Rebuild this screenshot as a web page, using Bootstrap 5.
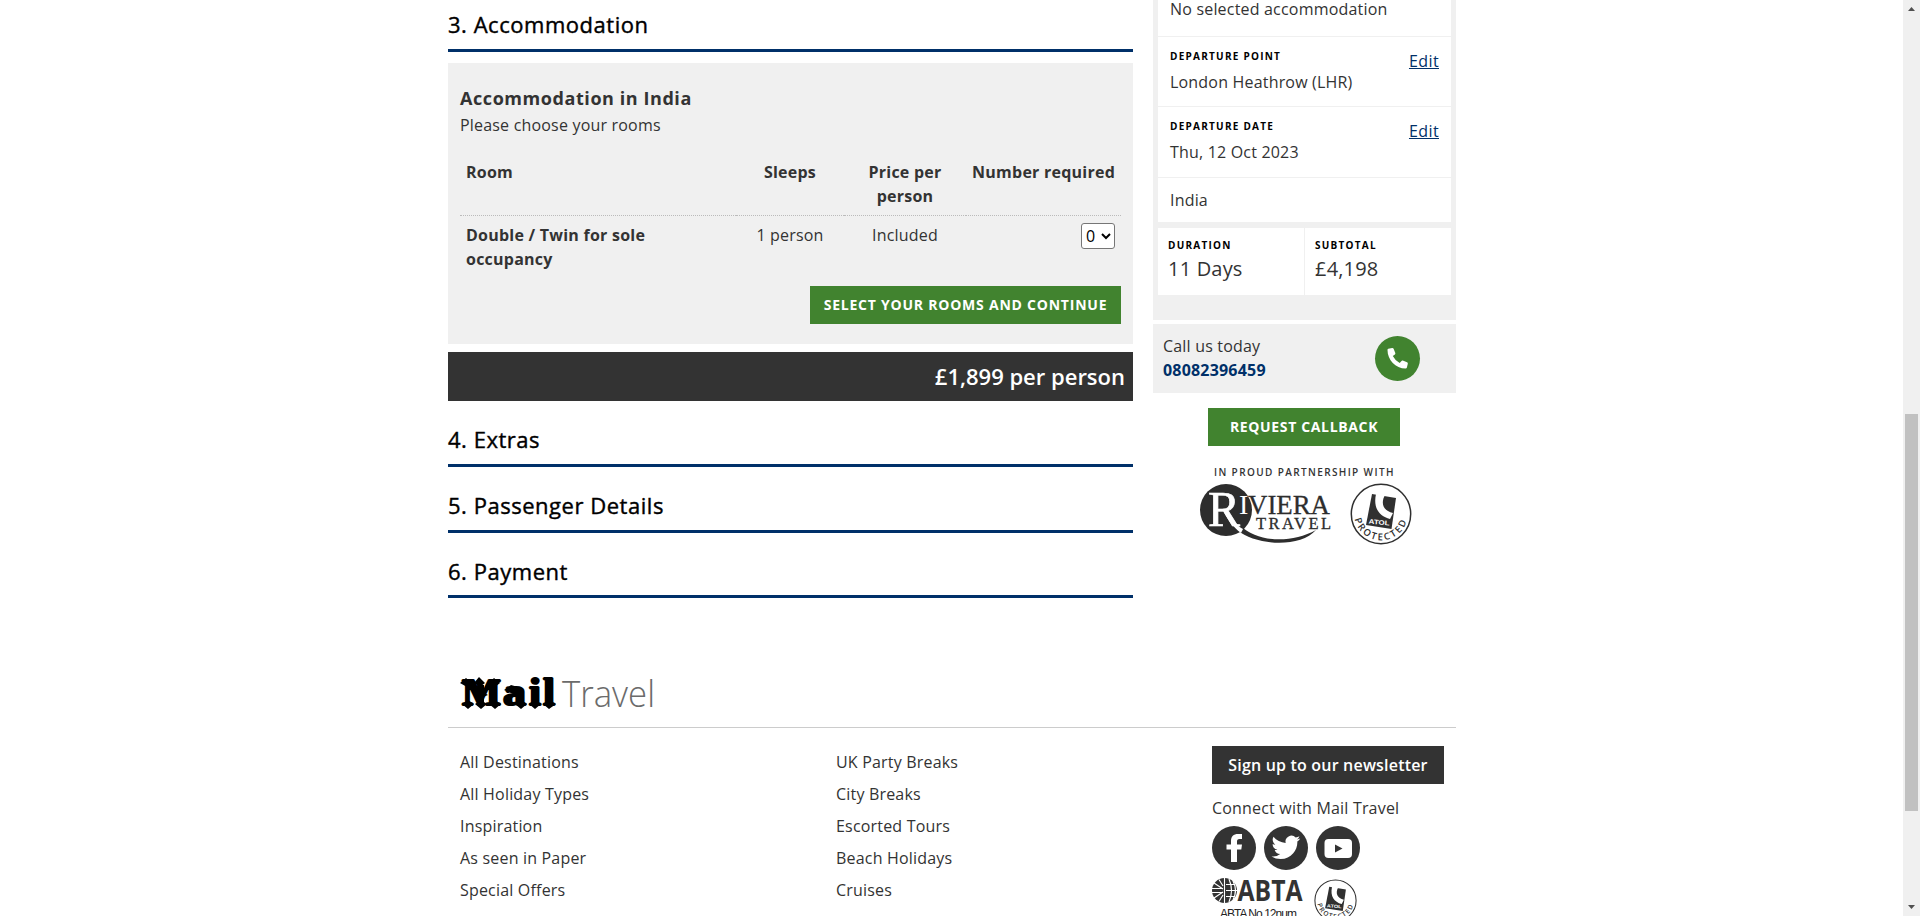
<!DOCTYPE html>
<html lang="en">
<head>
<meta charset="utf-8">
<title>Mail Travel</title>
<link href="https://cdn.jsdelivr.net/npm/bootstrap@5.3.0/dist/css/bootstrap.min.css" rel="stylesheet">
<style>
body{font-family:"Open Sans",sans-serif;font-size:16px;line-height:24px;letter-spacing:.19px;color:#333;background:#fff}
.wrapper{width:1008px;margin-left:448px}
.booking{width:685px}
.summary{width:303px}
.step{font-size:22px;line-height:30px;font-weight:500;letter-spacing:.53px;-webkit-text-stroke:.4px #000;color:#000;border-bottom:3px solid #003069;margin:0}
.step-first{height:52px;padding-top:9px}
.step-next{height:66px;padding-top:23px}
.panel{background:#f0f0f0;height:281px;margin-top:11px;padding:23px 12px 0}
.panel h3{font-size:18px;line-height:24px;font-weight:700;letter-spacing:.57px;margin:0}
.intro{margin-top:3px}
.rooms{width:661px;margin:20px 0 0;table-layout:fixed}
.rooms th{font-weight:700;letter-spacing:.24px}
.rooms th,.rooms td{padding:3px 6px 7px;vertical-align:top;line-height:24px}
.rooms thead tr{border-bottom:1px dotted #bbb}
.rooms tbody td,.rooms tbody th{padding-top:7px;padding-bottom:0}
.rooms select{width:34px;height:26px;padding:0;font:16px "Open Sans",sans-serif;border:1px solid #767676;border-radius:3px;background:#fff;display:inline-block}
.cta{background:#41832f;color:#fff;font-weight:700;border-radius:0;height:38px;line-height:38px;padding:0;border:0;letter-spacing:.77px;font-size:14px;text-align:center}
.cta-rooms{width:311px;margin-top:15px}
.cta-call{width:192px;margin:15px 0 0 55px;letter-spacing:.65px}
.price{background:#333;color:#fff;height:49px;margin-top:8px;padding:0 8px;font-size:22px;font-weight:600;line-height:49px;letter-spacing:0}
.frame{background:#f0f0f0;height:320px;padding:0 5px}
.frame-item{background:#fff;border-bottom:1px solid #f0f0f0;padding:0 12px}
.selected-room{margin-top:-3px}
.tag{font-size:10px;line-height:14px;font-weight:700;letter-spacing:1.25px;color:#000}
.frame a{color:#003069;letter-spacing:.4px}
.totals{background:#fff;height:67px;margin-top:6px}
.totals>div{padding:10px}
.duration{width:147px;border-right:1px solid #f0f0f0}
.big{font-size:20px;line-height:26px;margin-top:4px}
.callbox{background:#f0f0f0;height:69px;margin-top:4px;padding:10px}
.callbox b{color:#003069;font-weight:700}
.phone{width:45px;height:45px;margin:2px 26px 0 0}
.partner{font-size:10px;line-height:14px;font-weight:600;letter-spacing:1.38px;margin:19px 0 0 61px}
.site-footer{height:190px;border-top:1px solid #ccc;padding:17px 12px 0}
.links{width:376px;line-height:32px;padding-top:1px}
.newsletter{background:#333;color:#fff;font-weight:600;width:232px;height:38px;line-height:38px;text-align:center;margin-top:1px}
.scrollbar{width:17px;background:#f0f0f0}
.thumb{width:13px;height:397px;background:#c1c1c1;margin-top:406px}
svg{display:block;letter-spacing:0;overflow:visible}
</style>
<script src="https://cdn.jsdelivr.net/npm/bootstrap@5.3.0/dist/js/bootstrap.bundle.min.js"></script>
</head>
<body class="overflow-hidden">
<svg width="0" height="0" class="position-absolute">
  <defs>
    <symbol id="atol" viewBox="0 0 62 62">
      <circle cx="31" cy="31" r="29.7" fill="#fff" stroke="#303030" stroke-width="1.5"/>
      <path d="M22 11 46 15 41.500 46 16 42Z" fill="#303030"/>
      <path d="M26 11C23 25 29 33 40 36L43 30C34 28 30 21 35 12Z" fill="#fff"/>
      <text x="29" y="41.500" transform="rotate(5 29 41)" text-anchor="middle" font-family="Liberation Sans" font-weight="700" font-size="6.500" textLength="21" lengthAdjust="spacingAndGlyphs" fill="#fff">ATOL</text>
      <path id="arc" d="M4.600 35A26.800 26.800 0 0 0 57.600 34" fill="none"/>
      <text font-family="Open Sans" font-weight="600" font-size="9.500" fill="#303030" textLength="70"><textPath href="#arc" startOffset="1">PROTECTED</textPath></text>
    </symbol>
  </defs>
</svg>
<div class="d-flex vh-100 overflow-hidden">
  <div class="flex-grow-1 overflow-hidden">
    <div class="wrapper">
      <div class="d-flex justify-content-between" style="height:677px">
        <main class="booking">
          <h2 class="step step-first">3. Accommodation</h2>
          <section class="panel">
            <h3>Accommodation in India</h3>
            <div class="intro">Please choose your rooms</div>
            <table class="rooms">
              <colgroup><col style="width:276px"><col style="width:108px"><col style="width:122px"><col style="width:155px"></colgroup>
              <thead><tr><th>Room</th><th class="text-center">Sleeps</th><th class="text-center">Price per<br>person</th><th class="text-end text-nowrap">Number required</th></tr></thead>
              <tbody><tr><th>Double / Twin for sole<br>occupancy</th><td class="text-center">1 person</td><td class="text-center">Included</td><td class="text-end"><select aria-label="Number required"><option>0</option><option>1</option></select></td></tr></tbody>
            </table>
            <button class="cta cta-rooms d-block ms-auto">SELECT YOUR ROOMS AND CONTINUE</button>
          </section>
          <div class="price text-end">£1,899 per person</div>
          <h2 class="step step-next">4. Extras</h2>
          <h2 class="step step-next">5. Passenger Details</h2>
          <h2 class="step step-next" style="height:65px">6. Payment</h2>
        </main>
        <aside class="summary">
          <div class="frame">
            <div class="frame-item d-flex" style="height:37px"><div class="selected-room">No selected accommodation</div></div>
            <div class="frame-item d-flex justify-content-between" style="height:70px">
              <div><div class="tag" style="margin-top:12px">DEPARTURE POINT</div><div style="margin-top:7px">London Heathrow (LHR)</div></div>
              <a href="#" style="margin-top:12px">Edit</a>
            </div>
            <div class="frame-item d-flex justify-content-between" style="height:71px">
              <div><div class="tag" style="margin-top:12px">DEPARTURE DATE</div><div style="margin-top:7px">Thu, 12 Oct 2023</div></div>
              <a href="#" style="margin-top:12px">Edit</a>
            </div>
            <div class="frame-item border-0" style="height:44px;padding-top:10px">India</div>
            <div class="totals d-flex">
              <div class="duration"><div class="tag">DURATION</div><div class="big">11 Days</div></div>
              <div><div class="tag">SUBTOTAL</div><div class="big">£4,198</div></div>
            </div>
          </div>
          <div class="callbox d-flex justify-content-between">
            <div>Call us today<br><b>08082396459</b></div>
            <svg class="phone" viewBox="0 0 45 45"><circle cx="22.500" cy="22.500" r="22.500" fill="#41832f"/><path d="M12.500 14Q12.300 13 13.300 12.800L17.200 12Q18.200 11.900 18.600 12.800L20.300 17Q20.600 17.800 19.900 18.400L17.800 20.100Q20 24.600 24.700 27L26.500 24.900Q27.100 24.300 27.800 24.600L32 26.300Q33 26.700 32.800 27.700L31.900 31.600Q31.600 32.600 30.600 32.600C20.600 32.600 12.500 24 12.500 14Z" fill="#fff"/></svg>
          </div>
          <button class="cta cta-call d-block">REQUEST CALLBACK</button>
          <div class="partner">IN PROUD PARTNERSHIP WITH</div>
          <div class="d-flex" style="margin:4px 0 0 46px">
            <svg width="134" height="63" viewBox="0 0 134 63">
              <circle cx="27" cy="27" r="26" fill="#2d2d2d"/>
              <path d="M42 43C58 59 92 61 117 47C101 65 58 63 38 47Z" fill="#2d2d2d"/>
              <path d="M28 26C34 37 38 43 44 46L42 50C34 44 29 37 25 29Z" fill="#fff"/>
              <g font-family="Liberation Serif">
                <text x="9" y="43" font-size="50" fill="#fff" stroke="#fff" stroke-width=".7" textLength="32" lengthAdjust="spacingAndGlyphs">R</text>
                <text x="40" y="31" font-size="28" fill="#fff">I</text>
                <text x="49" y="31" font-size="28" fill="#2d2d2d" stroke="#2d2d2d" stroke-width=".3" textLength="82" lengthAdjust="spacingAndGlyphs">VIERA</text>
                <text x="57" y="45.500" font-size="16.500" fill="#2d2d2d" stroke="#2d2d2d" stroke-width=".3" textLength="75">TRAVEL</text>
              </g>
            </svg>
            <svg width="62" height="62" style="margin-left:17px"><use href="#atol"/></svg>
          </div>
        </aside>
      </div>
      <div style="height:50px;padding-left:12px">
        <svg width="200" height="36" viewBox="0 0 200 36">
          <g font-family="Liberation Serif" font-weight="700" font-size="38" fill="#000" stroke="#000" stroke-width="2.200" stroke-linejoin="bevel">
            <text y="28"><tspan x="2" textLength="39" lengthAdjust="spacingAndGlyphs">M</tspan><tspan x="43" textLength="23" lengthAdjust="spacingAndGlyphs">a</tspan><tspan x="69" textLength="12" lengthAdjust="spacingAndGlyphs">i</tspan><tspan x="83" textLength="12" lengthAdjust="spacingAndGlyphs">l</tspan></text>
          </g>
          <path d="M0 6 6 1 12 6 7 10ZM14 6 19 0 25 6 20 10ZM29 6 34 1 40 6 35 10ZM2 27 8 23 14 27 8 32ZM15 27 21 23 27 27 21 32ZM29 27 35 23 41 27 35 32ZM55 27 61 23 67 27 61 32ZM69 27 75 23 81 27 75 32ZM83 27 89 23 96 27 89 32ZM44 13 51 8 58 10 62 14 55 18ZM17 8H24V28H17ZM14 18 21 14 28 18 20 21Z" fill="#000"/>
          <text x="102" y="29.500" font-family="Open Sans" font-weight="300" font-size="36.500" fill="#6b6b6b" textLength="93" lengthAdjust="spacingAndGlyphs">Travel</text>
        </svg>
      </div>
      <footer class="site-footer d-flex">
        <div class="links">All Destinations<br>All Holiday Types<br>Inspiration<br>As seen in Paper<br>Special Offers</div>
        <div class="links">UK Party Breaks<br>City Breaks<br>Escorted Tours<br>Beach Holidays<br>Cruises</div>
        <div>
          <div class="newsletter">Sign up to our newsletter</div>
          <div style="margin:12px 0 6px">Connect with Mail Travel</div>
          <div class="d-flex gap-2">
            <svg width="44" height="44" viewBox="0 0 44 44"><circle cx="22" cy="22" r="22" fill="#333"/><path d="M19 36V23.500H14.500V18.500H19V15C19 10.500 21.500 8 26 8H30V13H27.500C25.500 13 25 14 25 15.500V18.500H30L29.300 23.500H25V36Z" fill="#fff"/></svg>
            <svg width="44" height="44" viewBox="0 0 44 44"><circle cx="22" cy="22" r="22" fill="#333"/><path transform="translate(7.500 7) scale(1.200)" d="M23.950 4.570a10 10 0 0 1-2.820.780 4.960 4.960 0 0 0 2.160-2.730c-.950.560-2 .960-3.130 1.190a4.920 4.920 0 0 0-8.380 4.480C7.690 8.090 4.070 6.130 1.640 3.160a4.920 4.920 0 0 0 1.520 6.570 4.900 4.900 0 0 1-2.230-.610v.060a4.920 4.920 0 0 0 3.950 4.830 5 5 0 0 1-2.210.080 4.940 4.940 0 0 0 4.600 3.420A9.870 9.870 0 0 1 0 19.540a14 14 0 0 0 7.550 2.210c9.050 0 14-7.500 14-13.980l-.020-.640a9.930 9.930 0 0 0 2.420-2.560z" fill="#fff"/></svg>
            <svg width="44" height="44" viewBox="0 0 44 44"><circle cx="22" cy="22" r="22" fill="#333"/><rect x="8.500" y="13" width="27.500" height="19" rx="4" fill="#fff"/><path d="M19 18.500V26.500L26.500 22.500Z" fill="#333"/></svg>
          </div>
          <div class="d-flex" style="margin-top:8px">
            <svg width="92" height="46" viewBox="0 0 92 46">
              <circle cx="12.500" cy="12.500" r="12.500" fill="#333"/>
              <path d="M12.500 0V25M0 10.500H11M0 14.500H11M2 5 11 11M2 20 11 14M7 1.500 11 8M7 23.500 11 17" stroke="#fff" stroke-width="1.100" fill="none"/>
              <path d="M14 12.500H25M14 6.500H23M14 18.500H23M17 1Q22 12.500 17 24M21 3Q26 12.500 21 22" stroke="#fff" stroke-width="1.200" fill="none"/>
              <text x="25.500" y="23" font-family="Open Sans" font-weight="700" font-size="28.500" fill="#333" textLength="65" lengthAdjust="spacingAndGlyphs">ABTA</text>
              <text x="8" y="40" font-family="Liberation Sans" font-size="12" fill="#222" textLength="77">ABTA No 12num</text>
            </svg>
            <svg width="43" height="43" style="margin:1px 0 0 10px"><use href="#atol"/></svg>
          </div>
        </div>
      </footer>
    </div>
  </div>
  <div class="scrollbar d-flex flex-column align-items-center flex-shrink-0">
    <svg width="7" height="4" style="margin-top:4px;transform:translateY(3px)" viewBox="0 0 7 4"><path d="M0 4 3.500 0 7 4Z" fill="#505050"/></svg>
    <div class="thumb"></div>
    <svg width="7" height="4" class="mt-auto" style="margin-bottom:7px" viewBox="0 0 7 4"><path d="M0 0H7L3.500 4Z" fill="#505050"/></svg>
  </div>
</div>
</body>
</html>
